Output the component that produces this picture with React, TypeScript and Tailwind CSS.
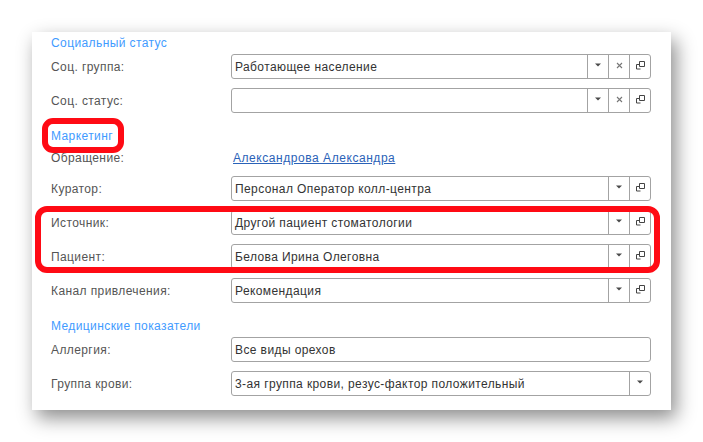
const font = 'font-["Liberation_Sans",Arial,sans-serif]';

const Caret = () => (
  <svg width="6" height="4" viewBox="0 0 6 4" className="-mt-[3px]">
    <path d="M0 .5h6L3 3.5z" fill="#4a4a4a" />
  </svg>
);

const Cross = () => (
  <svg width="7" height="7" viewBox="0 0 7 7" className="-mt-[3px]">
    <path d="M1 1l5 5M6 1L1 6" stroke="#777" strokeWidth="1.1" fill="none" />
  </svg>
);

const OpenIcon = () => (
  <svg width="11" height="11" viewBox="0 0 11 11" className="-mt-[2px]">
    <path d="M4.5 1.5h5v5h-5z" fill="none" stroke="#444" />
    <path d="M4.5 4.5h-3v4.5h4" fill="none" stroke="#444" />
  </svg>
);

const Cell = ({ children }: { children: React.ReactNode }) => (
  <div className="flex w-[21px] shrink-0 items-center justify-center border-l border-[#a3a3a3]">
    {children}
  </div>
);

type RowProps = {
  label: string;
  value?: string;
  buttons?: ('caret' | 'cross' | 'open')[];
};

const Row = ({ label, value = '', buttons = [] }: RowProps) => (
  <div className="flex h-[25px] items-center">
    <div className="w-[180px] shrink-0 text-[#555] tracking-[0.4px]">{label}</div>
    <div className="flex h-[25px] flex-1 rounded-[3px] border border-[#a3a3a3] bg-white">
      <div className="flex-1 pl-[3px] leading-[24px] text-[#333] tracking-[0.4px]">{value}</div>
      {buttons.map((b) => (
        <Cell key={b}>
          {b === 'caret' && <Caret />}
          {b === 'cross' && <Cross />}
          {b === 'open' && <OpenIcon />}
        </Cell>
      ))}
    </div>
  </div>
);

const Heading = ({ children, className }: { children: string; className: string }) => (
  <div className={`h-[20px] text-[#3f9bff] tracking-[0.4px] leading-[22px] ${className}`}>{children}</div>
);

export default function App() {
  return (
    <div className={`h-[442px] w-[703px] overflow-hidden bg-white pt-8 pl-8 text-[12px] ${font}`}>
      <div className="relative h-[378px] w-[639px] bg-white pl-[19px] pr-5 shadow-[5px_8px_18px_rgba(0,0,0,0.45)]">
        <Heading className="mt-0">Социальный статус</Heading>
        <div className="mt-[2px] flex flex-col gap-[9px]">
          <Row label="Соц. группа:" value="Работающее население" buttons={['caret', 'cross', 'open']} />
          <Row label="Соц. статус:" buttons={['caret', 'cross', 'open']} />
        </div>
        <Heading className="mt-3">Маркетинг</Heading>
        <div className="mt-[2px] flex h-[20px] items-center pt-[2px]">
          <div className="w-[180px] shrink-0 text-[#555] tracking-[0.4px]">Обращение:</div>
          <a className="ml-[2px] text-[#2a62b8] underline tracking-[0.55px]">Александрова Александра</a>
        </div>
        <div className="mt-[9px] flex flex-col gap-[9px]">
          <Row label="Куратор:" value="Персонал Оператор колл-центра" buttons={['caret', 'open']} />
          <Row label="Источник:" value="Другой пациент стоматологии" buttons={['caret', 'open']} />
          <Row label="Пациент:" value="Белова Ирина Олеговна" buttons={['caret', 'open']} />
          <Row label="Канал привлечения:" value="Рекомендация" buttons={['caret', 'open']} />
        </div>
        <Heading className="mt-3">Медицинские показатели</Heading>
        <div className="mt-[2px] flex flex-col gap-[9px]">
          <Row label="Аллергия:" value="Все виды орехов" />
          <Row label="Группа крови:" value="3-ая группа крови, резус-фактор положительный" buttons={['caret']} />
        </div>

        {/* red marks drawn over the form */}
        <div className="absolute left-[10px] top-[86px] h-[35px] w-[82px] rounded-[11px] border-[6px] border-[#ff0a14]" />
        <div className="absolute left-[3px] top-[174px] h-[67px] w-[625px] rounded-[12px] border-[6px] border-[#ff0a14]" />
      </div>
    </div>
  );
}
